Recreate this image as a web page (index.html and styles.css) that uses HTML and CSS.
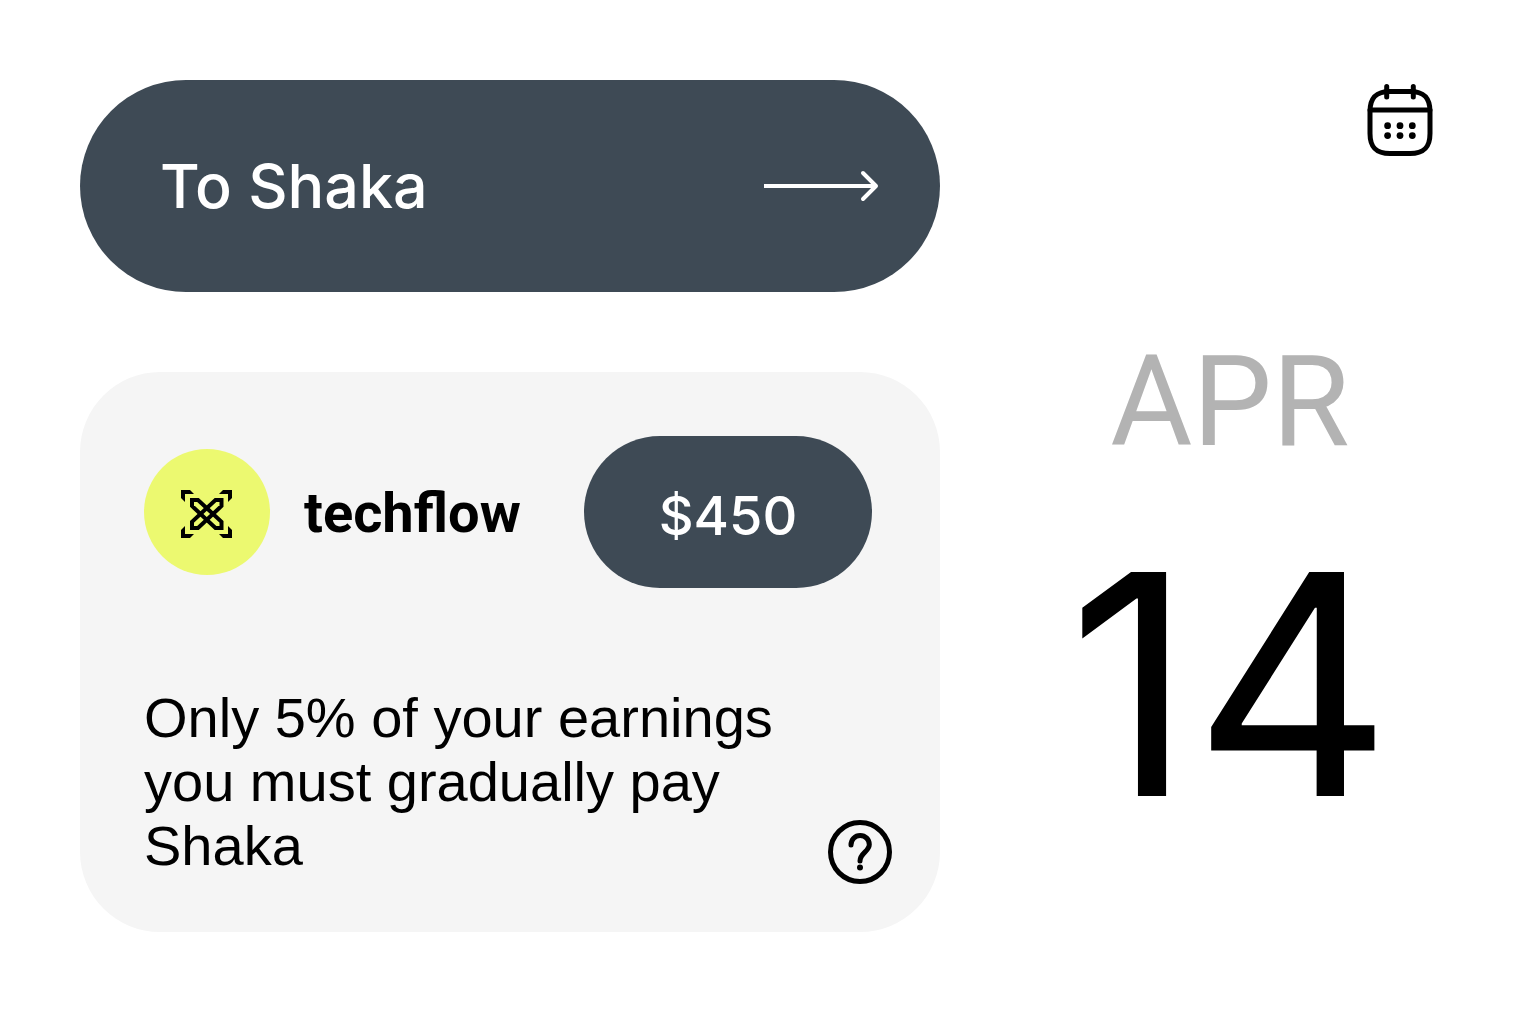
FILE: index.html
```html
<!DOCTYPE html>
<html lang="en">
<head>
    <meta charset="UTF-8">
    <meta name="viewport" content="width=device-width, initial-scale=1.0">
    <title>Shaka</title>
    <link rel="stylesheet" href="styles.css">
</head>
<body>
    <main class="container">
        <section class="left">
            <button type="button" class="transfer">
                <span>To Shaka</span>
                <svg class="arrow" viewBox="0 0 116 32" aria-hidden="true">
                    <path d="M0 16H112" stroke-linecap="butt"/>
                    <path d="M99 3L112 16L99 29"/>
                </svg>
            </button>
            <div class="card">
                <div class="card-header">
                    <div class="brand">
                        <span class="logo">
                            <svg viewBox="0 0 51 48" aria-hidden="true">
                                <path d="M0 0H9L13 4H4V12L0 8Z"/>
                                <path d="M51 0H42L38 4H47V12L51 8Z"/>
                                <path d="M0 48H9L13 44H4V36L0 40Z"/>
                                <path d="M51 48H42L38 44H47V36L51 40Z"/>
                                <path class="cross" d="M11 10H17L40.5 31.8V38H34.5L11 16Z"/>
                                <path class="cross" d="M40.5 10H34.5L11 31.8V38H17L40.5 16Z"/>
                            </svg>
                        </span>
                        <span class="brand-name">techflow</span>
                    </div>
                    <span class="amount">$450</span>
                </div>
                <div class="card-footer">
                    <p class="note">Only 5% of your earnings you must gradually pay Shaka</p>
                    <button type="button" class="icon-btn help" aria-label="Help">
                        <svg viewBox="0 0 64 64" aria-hidden="true">
                            <circle cx="32" cy="32" r="29.5"/>
                            <path d="M23 25C23 19.5 27 15.5 32.2 15.5S41.3 19.5 41.3 24.5C41.3 31.5 32 33 32 41"/>
                            <circle class="dot" cx="32" cy="47.5" r="3"/>
                        </svg>
                    </button>
                </div>
            </div>
        </section>
        <section class="right">
            <button type="button" class="icon-btn calendar" aria-label="Open calendar">
                <svg viewBox="0 0 80 80" aria-hidden="true">
                    <path d="M30 11.5H50C64 11.5 70 17.5 70 31.5V53.5C70 67.5 64 73.5 50 73.5H30C16 73.5 10 67.5 10 53.5V31.5C10 17.5 16 11.5 30 11.5Z"/>
                    <path d="M10 30H70M26.7 6.5V17M53.3 6.5V17"/>
                    <g class="dot">
                        <circle cx="27.6" cy="45.7" r="3.4"/>
                        <circle cx="40" cy="45.7" r="3.4"/>
                        <circle cx="52.3" cy="45.7" r="3.4"/>
                        <circle cx="27.6" cy="55.6" r="3.4"/>
                        <circle cx="40" cy="55.6" r="3.4"/>
                        <circle cx="52.3" cy="55.6" r="3.4"/>
                    </g>
                </svg>
            </button>
            <time class="date" datetime="04-14">
                <span class="month">APR</span>
                <span class="day">14</span>
            </time>
        </section>
    </main>
</body>
</html>
```
FILE: styles.css
```css
* {
    box-sizing: border-box;
}
body {
    margin: 0;
    background: #fff;
    color: #000;
    font-family: Inter, 'Liberation Sans', sans-serif;
}
button {
    border: none;
    font-family: inherit;
    cursor: pointer;
}
.container {
    display: grid;
    grid-template-columns: 43fr 21fr;
    gap: 80px;
    padding: 80px;
}
.left {
    display: flex;
    flex-direction: column;
    gap: 80px;
}
.transfer {
    display: flex;
    align-items: center;
    justify-content: space-between;
    padding: 66px 60px 66px 80px;
    border-radius: 106px;
    background: #3e4a55;
    color: #fff;
    font-size: 61px;
    font-weight: 500;
    line-height: 80px;
}
.arrow {
    width: 116px;
    height: 32px;
    fill: none;
    stroke: #fff;
    stroke-width: 4;
    stroke-linecap: round;
    stroke-linejoin: round;
}
.card {
    display: flex;
    flex-direction: column;
    gap: 98px;
    padding: 64px 48px 48px 64px;
    border-radius: 80px;
    background: #f5f5f5;
}
.card-header {
    display: flex;
    align-items: center;
    justify-content: space-between;
    padding-right: 20px;
}
.brand {
    display: flex;
    align-items: center;
    gap: 34px;
}
.logo {
    display: flex;
    align-items: center;
    justify-content: center;
    width: 126px;
    height: 126px;
    padding: 4px 2px 0 0;
    border-radius: 50%;
    background: #ecf970;
}
.logo svg {
    width: 51px;
    height: 48px;
}
.logo .cross {
    fill: none;
    stroke: #000;
    stroke-width: 4;
}
.brand-name {
    padding-top: 2px;
    font-family: Roboto, sans-serif;
    font-size: 56px;
    font-weight: 700;
}
.amount {
    min-width: 288px;
    padding: 48px 32px 40px;
    border-radius: 76px;
    background: #3e4a55;
    color: #fff;
    font-size: 54px;
    font-weight: 500;
    line-height: 64px;
    text-align: center;
}
.card-footer {
    display: flex;
    align-items: flex-end;
    justify-content: space-between;
}
.note {
    max-width: 660px;
    margin: 0;
    padding-bottom: 6px;
    font-family: 'Liberation Sans', sans-serif;
    font-size: 56px;
    line-height: 64px;
}
.icon-btn {
    flex: none;
    padding: 0;
    background: none;
}
.icon-btn svg {
    display: block;
    width: 100%;
    height: 100%;
    fill: none;
    stroke: #000;
    stroke-width: 5;
    stroke-linecap: round;
    stroke-linejoin: round;
}
.icon-btn .dot {
    fill: #000;
    stroke: none;
}
.help {
    width: 64px;
    height: 64px;
}
.calendar {
    align-self: flex-end;
    width: 80px;
    height: 80px;
}
.right {
    display: flex;
    flex-direction: column;
    gap: 162px;
}
.date {
    display: flex;
    flex-direction: column;
    align-items: center;
    gap: 42px;
}
.month {
    color: #b3b3b3;
    font-family: Roboto, sans-serif;
    font-size: 126px;
    line-height: 160px;
}
.day {
    font-size: 308px;
    line-height: 320px;
}
```
